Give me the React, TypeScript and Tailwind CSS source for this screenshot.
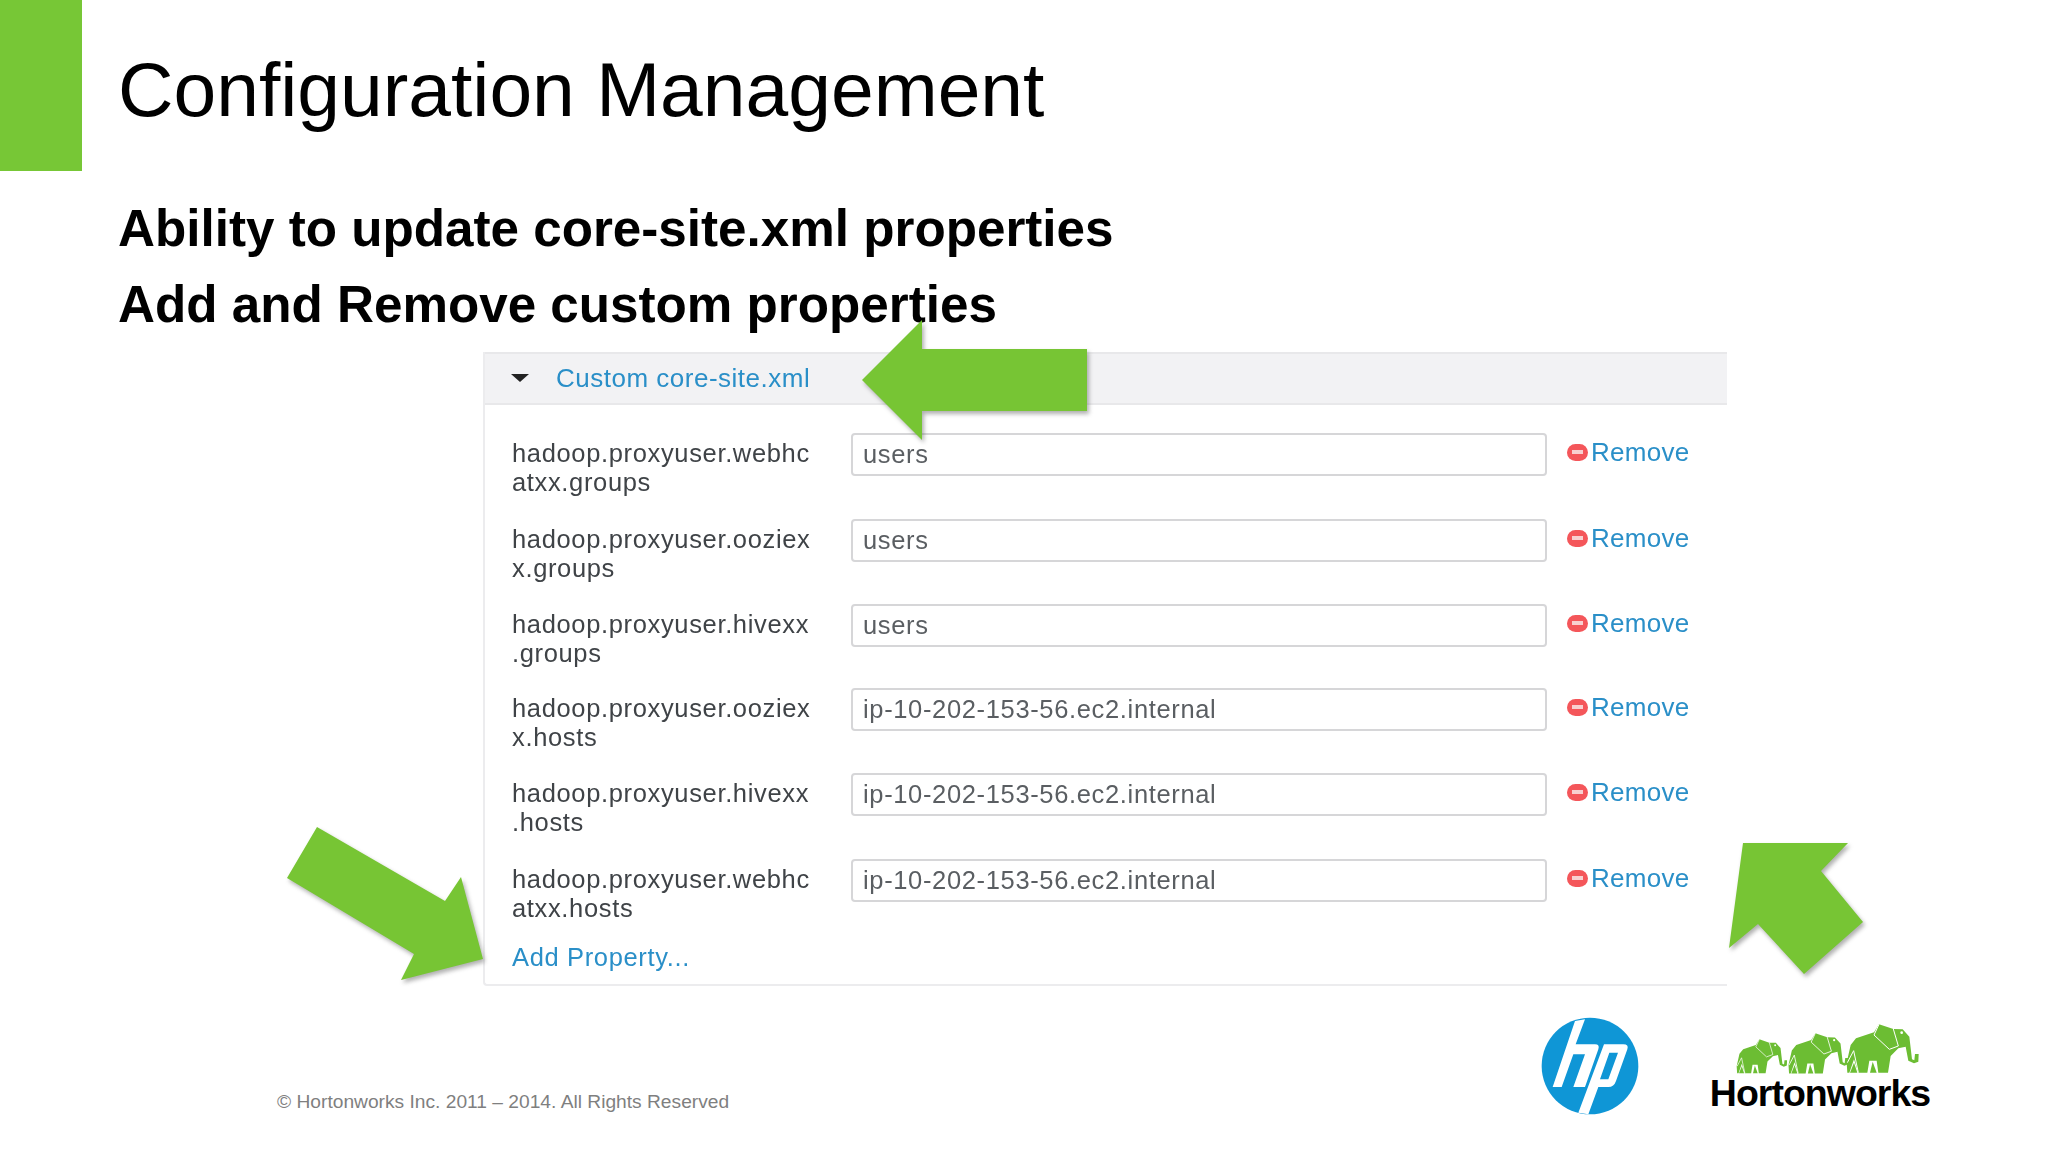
const rows = [
  { a: "hadoop.proxyuser.webhc", b: "atxx.groups", v: "users", h: "h-[86px]" },
  { a: "hadoop.proxyuser.ooziex", b: "x.groups", v: "users", h: "h-[85px]" },
  { a: "hadoop.proxyuser.hivexx", b: ".groups", v: "users", h: "h-[84px]" },
  { a: "hadoop.proxyuser.ooziex", b: "x.hosts", v: "ip-10-202-153-56.ec2.internal", h: "h-[85px]" },
  { a: "hadoop.proxyuser.hivexx", b: ".hosts", v: "ip-10-202-153-56.ec2.internal", h: "h-[86px]" },
  { a: "hadoop.proxyuser.webhc", b: "atxx.hosts", v: "ip-10-202-153-56.ec2.internal", h: "h-[83px]" },
];

const Arrow = ({ points }: { points: string }) => (
  <svg
    viewBox="0 0 2048 1153"
    className="absolute left-0 top-0 w-[2048px] h-[1153px] pointer-events-none drop-shadow-[2px_3px_2px_rgba(80,80,80,0.45)]"
  >
    <polygon points={points} fill="#77c534" />
  </svg>
);

const Elephant = ({ transform }: { transform: string }) => (
  <g transform={transform}>
    <path
      d="M350 128 L362 75 L378 55 L432 37 L447 13 L490 27 L518 28 L538 50 L546 118 L553 121 L555 102 L566 102 L565 125 L552 130 L535 122 L527 80 L505 85 L482 108 L474 158 L445 158 L440 122 L418 122 L412 158 L385 158 L372 118 L358 158 L352 158 Z"
      fill="#6cbd33"
    />
    <polygon points="372,128 360,158 382,158" fill="#6cbd33" />
    <polygon points="428,125 420,158 440,158" fill="#6cbd33" />
    <path d="M447 13 L432 45 L478 88 L505 78 M490 27 L505 78 M352 128 L371 92 L385 158" fill="none" stroke="#fff" strokeWidth="3" />
    <circle cx="515" cy="38" r="4" fill="#fff" />
  </g>
);

const HpLogo = () => (
  <svg viewBox="0 0 360 360" className="w-[120px] h-[120px] shrink-0 mt-[25px]">
    <circle cx="180" cy="165" r="145" fill="#0f96d6" />
    <path
      d="M135 30 L165 25 L137 100 L195 100 Q210 100 205 115 L165 228 L130 228 L165 130 L130 130 L95 228 L68 228 Z"
      fill="#fff"
    />
    <path
      fillRule="evenodd"
      d="M222 100 L280 100 Q297 100 292 115 L258 210 Q252 228 235 228 L205 228 L175 310 L145 305 Z M238 125 L264 125 L235 205 L210 205 Z"
      fill="#fff"
    />
  </svg>
);

const Hortonworks = () => (
  <div className="flex flex-col items-center w-[230px] mt-[34px]">
    <svg viewBox="0 0 600 180" className="w-[200px] h-[60px] ml-[20px] shrink-0">
      <Elephant transform="translate(-225 49) scale(0.7)" />
      <Elephant transform="translate(-115 29) scale(0.83)" />
      <Elephant transform="" />
    </svg>
    <span className="font-bold text-[37.5px] leading-[36px] tracking-[-1px] text-black -mt-[5px]">Hortonworks</span>
  </div>
);

const Row = ({ a, b, v, h }: { a: string; b: string; v: string; h: string }) => (
  <div className={"flex items-start " + h}>
    <div className="w-[366px] pl-[27px] pt-[6px] text-[25.5px] leading-[29px] tracking-[0.65px] text-[#3f4347] whitespace-nowrap">
      <div>{a}</div>
      <div>{b}</div>
    </div>
    <div className="w-[696px] h-[43px] border-2 border-[#d6d6d8] rounded-[4px] flex items-center pl-[10px] pb-[1px] text-[25.5px] tracking-[0.65px] text-[#5a5e62]">
      {v}
    </div>
    <div className="flex items-center ml-[20px] h-[38px]">
      <span className="w-[21px] h-[17px] rounded-full bg-[#f4565a] flex items-center justify-center">
        <span className="w-[11px] h-[4px] bg-[#f8d0d0]" />
      </span>
      <span className="ml-[3px] text-[26px] tracking-[0.3px] text-[#2a8fc8]">Remove</span>
    </div>
  </div>
);

export default function App() {
  return (
    <div className="relative w-[2048px] h-[1153px] overflow-hidden bg-white font-['Liberation_Sans',sans-serif]">
      <header className="flex h-[171px]">
        <div className="w-[82px] h-full bg-[#77c736]" />
        <h1 className="ml-[36px] pt-[42px] text-[76.8px] leading-[94px] text-black">Configuration Management</h1>
      </header>

      <div className="pl-[118px] pt-[20px] text-[51.2px] leading-[76px] font-bold text-black">
        <p>Ability to update core-site.xml properties</p>
        <p>Add and Remove custom properties</p>
      </div>

      <section className="ml-[483px] mt-[9px] w-[1244px] h-[634px] border-l-2 border-b-2 border-[#ececee] rounded-bl-[4px] blur-[0.6px]">
        <div className="flex items-center h-[53px] bg-[#f2f2f4] border-t-2 border-b-2 border-[#e8e8ea] pl-[26px]">
          <span className="w-0 h-0 -mt-[2px] border-x-[9px] border-x-transparent border-t-[8px] border-t-[#222]" />
          <span className="ml-[27px] text-[26px] tracking-[0.5px] text-[#2a8fc8]">Custom core-site.xml</span>
        </div>
        <div className="pt-[28px]">
          {rows.map((r, i) => (
            <Row key={i} {...r} />
          ))}
        </div>
        <div className="pl-[27px] text-[25.5px] leading-[30px] tracking-[0.65px] text-[#2a8fc8]">Add Property...</div>
      </section>

      <footer className="flex items-start pl-[277px] pr-[113px] h-[167px]">
        <span className="mt-[102px] text-[19.2px] text-[#7f7f7f]">© Hortonworks Inc. 2011 – 2014. All Rights Reserved</span>
        <div className="ml-auto flex items-start gap-[55px]">
          <HpLogo />
          <Hortonworks />
        </div>
      </footer>

      <Arrow points="862,380 922,320 922,349 1087,349 1087,411 922,411 922,440" />
      <Arrow points="317,827 287,878 414,954 401,980 483,959 461,877 445,901" />
      <Arrow points="1743,843 1848,843 1821,871 1863,922 1804,974 1758,924 1729,948" />
    </div>
  );
}
